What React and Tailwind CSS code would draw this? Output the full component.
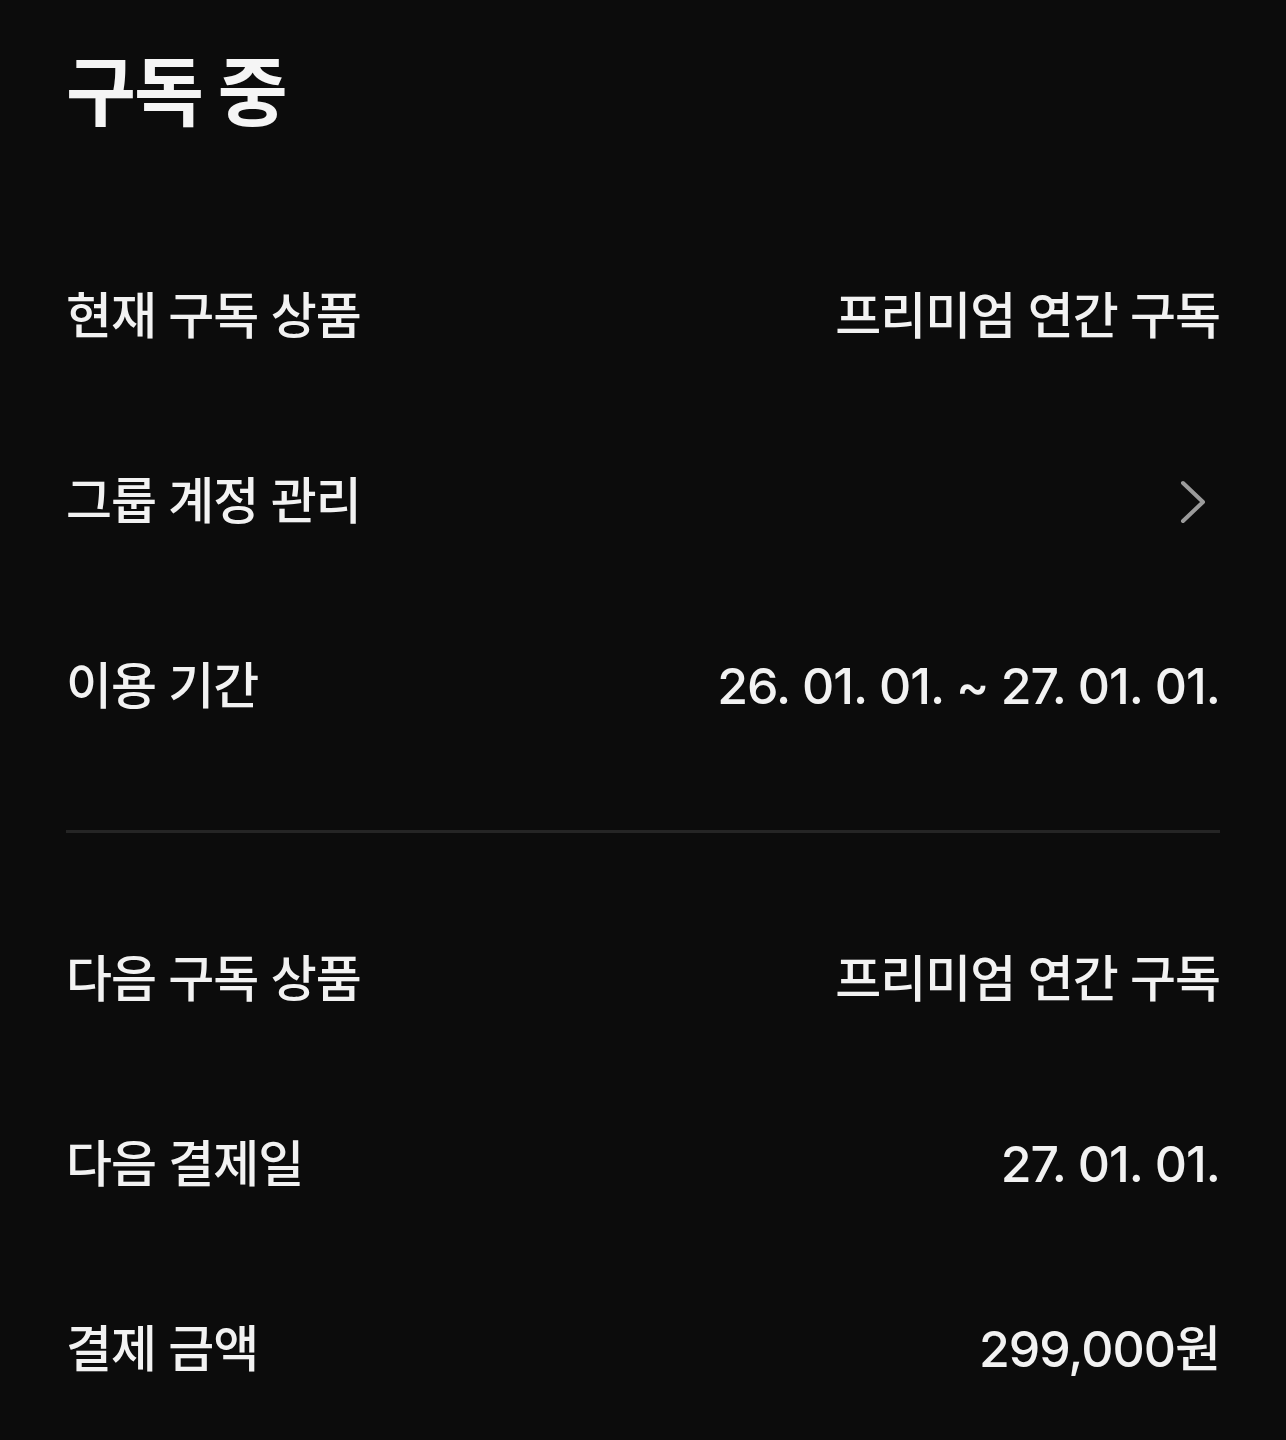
import React from 'react';

const ChevronRight = () => (
  <svg width="30" height="46" viewBox="0 0 30 46" fill="none" stroke="#9b9b9b" strokeWidth={4} strokeLinecap="round" strokeLinejoin="round">
    <path d="M4 4l20 19-20 19" />
  </svg>
);

const rows = [
  { label: '현재 구독 상품', value: '프리미엄 연간 구독' },
  { label: '그룹 계정 관리', arrow: true },
  { label: '이용 기간', value: '26. 01. 01. ~ 27. 01. 01.' },
];

const nextRows = [
  { label: '다음 구독 상품', value: '프리미엄 연간 구독' },
  { label: '다음 결제일', value: '27. 01. 01.' },
  { label: '결제 금액', value: '299,000원' },
];

function Row({ label, value, arrow }) {
  return (
    <div className="flex h-[185px] items-center justify-between">
      <span className="text-[50px] font-medium tracking-[-1px] text-[#f2f2f2]">{label}</span>
      {arrow ? (
        <span className="mr-[11px] flex items-center">
          <ChevronRight />
        </span>
      ) : (
        <span className="text-[50px] font-medium tracking-[-1px] text-[#f2f2f2]">{value}</span>
      )}
    </div>
  );
}

export default function App() {
  return (
    <div
      className="min-h-[1440px] w-full bg-[#0c0c0c] px-[66px]"
      style={{ fontFamily: 'Inter, "Noto Sans CJK KR", sans-serif' }}
    >
      <h1 className="flex h-[184px] items-center text-[76px] font-bold tracking-[-2px] text-[#f5f5f5]">
        구독 중
      </h1>
      <div className="mt-[40px]">
        {rows.map((r) => (
          <Row key={r.label} {...r} />
        ))}
      </div>
      <div className="mt-[51px] mb-[54px] h-[3px] bg-[#252525]" />
      <div>
        {nextRows.map((r) => (
          <Row key={r.label} {...r} />
        ))}
      </div>
    </div>
  );
}
